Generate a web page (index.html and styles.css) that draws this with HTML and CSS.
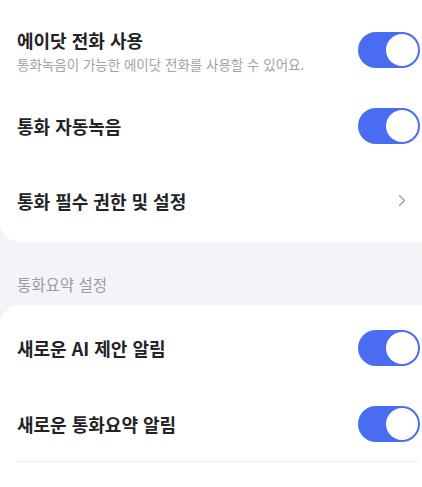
FILE: index.html
```html
<!DOCTYPE html>
<html lang="ko">
<head>
  <meta charset="UTF-8">
  <meta name="viewport" content="width=device-width, initial-scale=1.0">
  <title>통화 설정</title>
  <link rel="stylesheet" href="styles.css">
</head>
<body>

  <div class="card card-top">
    <div class="row">
      <div class="text">
        <div class="title">에이닷 전화 사용</div>
        <div class="desc">통화녹음이 가능한 에이닷 전화를 사용할 수 있어요.</div>
      </div>
      <span class="toggle on"><span class="knob"></span></span>
    </div>

    <div class="row">
      <div class="title">통화 자동녹음</div>
      <span class="toggle on"><span class="knob"></span></span>
    </div>

    <div class="row">
      <div class="title">통화 필수 권한 및 설정</div>
      <svg class="chevron" width="8" height="13" viewBox="0 0 8 13">
        <path d="M1.5 1.5 L6.5 6.5 L1.5 11.5" fill="none" stroke="#9a9ca3" stroke-width="1.4" stroke-linecap="round" stroke-linejoin="round"/>
      </svg>
    </div>
  </div>

  <div class="section-label">통화요약 설정</div>

  <div class="card card-bottom">
    <div class="row">
      <div class="title">새로운 AI 제안 알림</div>
      <span class="toggle on"><span class="knob"></span></span>
    </div>

    <div class="row">
      <div class="title">새로운 통화요약 알림</div>
      <span class="toggle on"><span class="knob"></span></span>
    </div>

    <div class="divider"></div>
  </div>

</body>
</html>
```

FILE: styles.css
```css
body {
  margin: 0;
  padding: 0;
  background-color: #f3f4f7;
  font-family: "Noto Sans CJK KR", "Noto Sans", sans-serif;
  color: #222327;
}

/* cards run off the top / right / bottom edges of the screen */
.card {
  background: #fff;
}

.card-top {
  padding-top: 12px;
  padding-bottom: 4px;
  border-radius: 0 0 0 20px;
}

.card-bottom {
  padding-top: 5px;
  padding-bottom: 30px;
  border-radius: 20px 0 0 0;
}

.row {
  height: 75px;
  display: flex;
  align-items: center;
  justify-content: space-between;
  padding: 0 2px 0 17px;
}

.row:first-child {
  height: 76px;
}

.text {
  display: flex;
  flex-direction: column;
  gap: 3px;
}

.title {
  font-size: 18px;
  font-weight: 700;
  line-height: 24px;
}

.desc {
  font-size: 13.5px;
  line-height: 18px;
  color: #a0a3aa;
}

.chevron {
  margin-right: 14px;
}

.toggle {
  position: relative;
  width: 62px;
  height: 36px;
  border-radius: 18px;
  background-color: #4a6cf0;
  flex-shrink: 0;
}

.toggle .knob {
  position: absolute;
  top: 2px;
  right: 2px;
  width: 32px;
  height: 32px;
  border-radius: 50%;
  background: #fff;
}

.section-label {
  padding: 33px 17px 12px;
  font-size: 15.5px;
  line-height: 18px;
  color: #9a9ca3;
}

.divider {
  height: 1px;
  margin: 0 5px 0 17px;
  background-color: #eeeff2;
}
```
